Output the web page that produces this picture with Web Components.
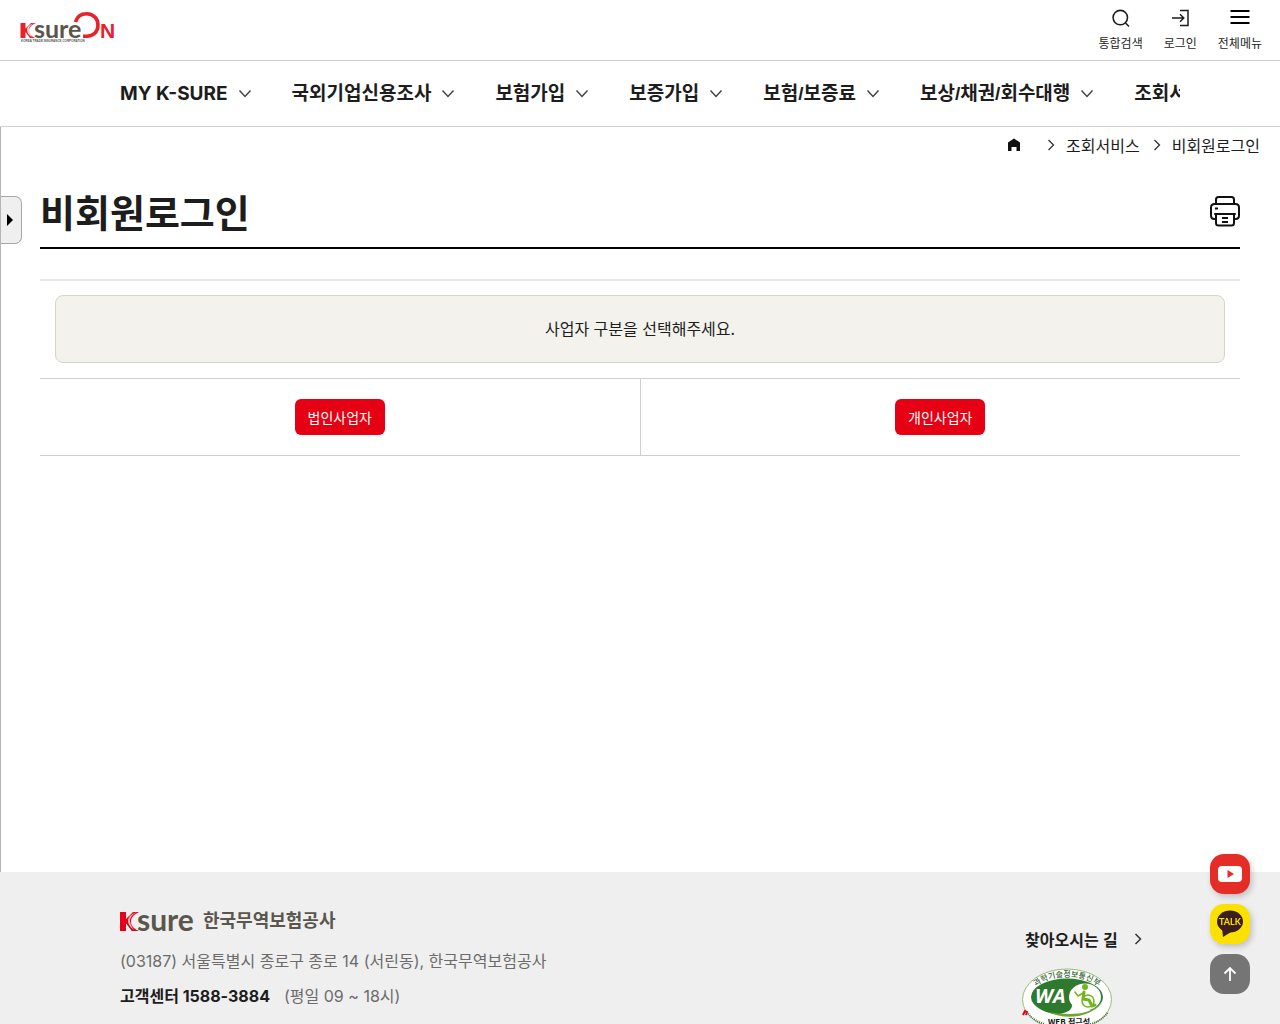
<!DOCTYPE html>
<html lang="ko">
<head>
<meta charset="utf-8">
<meta name="viewport" content="width=device-width, initial-scale=1">
<title>비회원로그인 | K-SURE 한국무역보험공사</title>
<style>
  html, body {
    margin: 0;
    height: 100%;
  }

  body {
    overflow: hidden;
    background: #fff;
    color: #1d1d1d;
    font: 16px/24px "Noto Sans CJK KR", "Liberation Sans", sans-serif;
  }
</style>
</head>
<body>
<ksure-app></ksure-app>

<script>
const define = (name, html) => {
  const template = document.createElement("template");
  template.innerHTML = html;

  customElements.define(name, class extends HTMLElement {
    constructor() {
      super();
      this.attachShadow({ mode: "open" }).appendChild(template.content.cloneNode(true));
    }
  });
};

// red K with a pale swoosh, then grey letters
define("ksure-mark", `
  <style>
    :host { display: block; }
    svg { display: block; }
    text { font: 700 30px Lato, "Liberation Sans", sans-serif; }
  </style>
  <svg width="76" height="24" viewBox="0 0 76 24" role="img" aria-label="K-SURE">
    <path d="M0 3h6v7l7-7h6c-6 3-8 6-8 10s3 7 8 9h-7l-6-8v8H0z" fill="#e60019"/>
    <path d="M8 13c1 4 5 8 11 9h-7l-6-8z" fill="#b5121f"/>
    <path d="M17 3c-6 2-9 5-9 9 0 3 2 6 6 9-3-4-4-7-4-9 0-4 3-7 7-9z" fill="#f4b9bb"/>
    <text x="17" y="22" fill="#5b564d">sure</text>
  </svg>
`);

define("tool-button", `
  <style>
    :host { display: block; }
    button {
      display: flex;
      flex-direction: column;
      align-items: center;
      gap: 6px;
      padding: 0;
      border: 0;
      background: none;
      color: #1d1d1d;
      font: 12px/18px "Noto Sans CJK KR", sans-serif;
      white-space: nowrap;
      cursor: pointer;
    }
  </style>
  <button type="button"><slot name="icon"></slot><slot></slot></button>
`);

define("top-bar", `
  <style>
    :host {
      display: flex;
      justify-content: space-between;
      box-sizing: border-box;
      height: 61px;
      padding: 8px 18px 0 20px;
      border-bottom: 1px solid #cdcdcd;
    }
    .logo { display: block; padding-top: 3px; }
    svg { display: block; }
    .tools { display: flex; gap: 21px; }
    .sure { font: 700 25px Lato, "Liberation Sans", sans-serif; }
    .on { font: 700 21px "Liberation Sans", sans-serif; }
    .caption { font: 700 3px "Liberation Sans", sans-serif; }
  </style>
  <a class="logo" href="#" aria-label="K-SURE ON">
    <svg width="96" height="34" viewBox="0 0 96 34">
      <path d="M.5 12h5v5.500L11 12h5c-5 2-7 5-7 8 0 3 2 5 6 7h-5l-4.500-6v6h-5z" fill="#e8212b"/>
      <path d="M14 12c-5 2-7 4-7 7s2 5 5 7c-2-3-3-5-3-7s1-5 5-7z" fill="#fbd5d6"/>
      <text class="sure" x="14" y="26.500" fill="#5b564d">sure</text>
      <path d="M55.500 11C57 5.500 61 2.800 66.500 2.800c7 0 11.500 5 11.500 11.200 0 7-5 11.200-11 11.200h-4" fill="none" stroke="#e8212b" stroke-width="3.600"/>
      <text class="on" x="80" y="26.500" fill="#e8212b">N</text>
      <text class="caption" x="1" y="31" fill="#5b564d">KOREA TRADE INSURANCE CORPORATION</text>
    </svg>
  </a>
  <div class="tools">
    <tool-button>
      <svg slot="icon" width="20" height="20" viewBox="0 0 20 20" fill="none" stroke="#1d1d1d" stroke-width="1.600"><circle cx="9.300" cy="9.600" r="7.200"/><path d="m14.500 15 3.500 3.500"/></svg>
      통합검색
    </tool-button>
    <tool-button>
      <svg slot="icon" width="20" height="20" viewBox="0 0 20 20" fill="none" stroke="#1d1d1d" stroke-width="1.500"><path d="M10 2.500h8v15h-8M2 10h12M10 6.200l3.800 3.800-3.800 3.800"/></svg>
      로그인
    </tool-button>
    <tool-button>
      <svg slot="icon" width="20" height="20" viewBox="0 0 20 20" stroke="#000" stroke-width="2"><path d="M.5 3h19M.5 9h19M.5 15h19"/></svg>
      전체메뉴
    </tool-button>
  </div>
`);

define("nav-item", `
  <style>
    :host { display: block; flex: none; }
    a {
      display: flex;
      align-items: center;
      gap: 10px;
      color: #1d1d1d;
      font: 700 19px/28px "Liberation Sans", "Noto Sans CJK KR", sans-serif;
      text-decoration: none;
      white-space: nowrap;
    }
    :host([latin]) a { font-family: Inter, sans-serif; }
  </style>
  <a href="#"><slot></slot>
    <svg width="14" height="10" viewBox="0 0 14 10" fill="none" stroke="#444" stroke-width="1.500" aria-hidden="true"><path d="m1.500 1.500 5.500 6 5.500-6"/></svg>
  </a>
`);

define("main-nav", `
  <style>
    :host { display: block; border-bottom: 1px solid #d2d2d2; padding: 0 100px; }
    nav {
      display: flex;
      align-items: center;
      gap: 40px;
      height: 65px;
      padding-left: 20px;
      overflow: hidden;
    }
  </style>
  <nav aria-label="주메뉴">
    <nav-item latin>MY K-SURE</nav-item>
    <nav-item>국외기업신용조사</nav-item>
    <nav-item>보험가입</nav-item>
    <nav-item>보증가입</nav-item>
    <nav-item>보험/보증료</nav-item>
    <nav-item>보상/채권/회수대행</nav-item>
    <nav-item>조회서비스</nav-item>
  </nav>
`);

define("bread-crumb", `
  <style>
    :host { display: block; padding: 6px 20px 0; }
    nav { display: flex; align-items: center; justify-content: flex-end; gap: 11px; }
    a { color: #1d1d1d; text-decoration: none; }
    svg { display: block; }
    .home { margin-right: 13px; }
    .arrow { margin-left: 2px; }
  </style>
  <nav aria-label="현재 위치">
    <a class="home" href="#" aria-label="홈"><svg width="14" height="16" viewBox="0 0 14 16"><path d="M7 1.500 13 5.500V14H9.500v-4h-5v4H1V5.500z" fill="#111"/></svg></a>
    <svg class="arrow" width="8" height="12" viewBox="0 0 8 12" fill="none" stroke="#333" stroke-width="1.300"><path d="m1.500 1 5 5-5 5"/></svg>
    <a href="#">조회서비스</a>
    <svg class="arrow" width="8" height="12" viewBox="0 0 8 12" fill="none" stroke="#333" stroke-width="1.300"><path d="m1.500 1 5 5-5 5"/></svg>
    <a href="#" aria-current="page">비회원로그인</a>
  </nav>
`);

define("page-heading", `
  <style>
    :host {
      display: flex;
      align-items: center;
      justify-content: space-between;
      padding: 26px 0 8px;
      border-bottom: 2px solid #000;
    }
    h1 { margin: 0; font-size: 38px; line-height: 56px; font-weight: 700; }
    button { padding: 0; border: 0; background: none; cursor: pointer; }
    svg { display: block; }
  </style>
  <h1><slot></slot></h1>
  <button type="button" aria-label="인쇄">
    <svg width="30" height="32" viewBox="0 0 30 32" fill="none" stroke="#111" stroke-width="2" stroke-linejoin="round" stroke-linecap="round">
      <path d="M6 9V4.500Q6 2 8.500 2h13Q24 2 24 4.500V9M6 24H4.500Q1 24 1 20.500v-8Q1 9 4.500 9h21Q29 9 29 12.500v8q0 3.500-3.500 3.500H24M5 19h20M6 19v9q0 2.500 2.500 2.500h13q2.500 0 2.500-2.500v-9"/>
      <path d="M5 13.500h3M12 23h6M12 27h6" stroke-linecap="butt"/>
    </svg>
  </button>
`);

define("business-select", `
  <style>
    :host { display: block; margin-top: 30px; border-top: 2px solid #e6e6e6; }
    .notice {
      margin: 14px 15px 15px;
      padding: 20px 21px 22px;
      border: 1px solid #d5d5c8;
      border-radius: 8px;
      background: #f3f2ed;
      text-align: center;
    }
    .choices { display: flex; border: solid #d0d0ca; border-width: 1px 0; }
    .choices div { flex: 1; padding: 20px 0; text-align: center; }
    .choices div + div { border-left: 1px solid #d0d0d0; }
    button {
      height: 36px;
      padding: 0 13px;
      border: 0;
      border-radius: 6px;
      background: #e60013;
      color: #fff;
      font: 14px/20px "Noto Sans CJK KR", sans-serif;
      vertical-align: top;
      cursor: pointer;
    }
  </style>
  <div class="notice">사업자 구분을 선택해주세요.</div>
  <div class="choices">
    <div><button type="button">법인사업자</button></div>
    <div><button type="button">개인사업자</button></div>
  </div>
`);

define("side-toggle", `
  <style>
    :host { position: absolute; top: 69px; left: 0; }
    button {
      display: flex;
      align-items: center;
      width: 21px;
      height: 48px;
      padding: 0 6px;
      border: 1px solid #a8a8a8;
      border-left: 0;
      border-radius: 0 7px 7px 0;
      background: #efefef;
      cursor: pointer;
    }
    svg { display: block; flex: none; }
  </style>
  <button type="button" aria-label="메뉴 열기">
    <svg width="6" height="12" viewBox="0 0 6 12"><path d="m0 0 6 6-6 6z"/></svg>
  </button>
`);

define("web-mark", `
  <style>
    :host { display: block; }
    svg { display: block; }
    text { font-family: "Noto Sans CJK KR", sans-serif; }
    .wa { font: italic 700 20px "Open Sans", sans-serif; }
  </style>
  <svg width="92" height="68" viewBox="0 0 92 68" role="img" aria-label="WEB 접근성">
    <defs>
      <path id="arc" d="M6 27C20 3 70 3 84 27"/>
    </defs>
    <ellipse cx="45" cy="31.500" rx="44.500" ry="30.500" fill="#fff" stroke="#9dbb74"/>
    <ellipse cx="45" cy="29" rx="36" ry="18.500" fill="#2d7a2e"/>
    <ellipse cx="63" cy="29" rx="16" ry="13.500" fill="#fff"/>
    <path d="M50 37c0 5-4 7-12 9 10 2 24 1 31-4z" fill="#fff"/>
    <path d="M26 44c18 9 43 5 54-9-8 8-20 11-33 11-8 0-15-1-21-2z" fill="#69a92b"/>
    <text class="wa" x="13" y="35" fill="#fff">WA</text>
    <g fill="none" stroke="#75b51c" stroke-linecap="round" stroke-linejoin="round">
      <circle cx="66" cy="33" r="6" stroke-width="1.500"/>
      <path d="m62 24-1 7 6 1 3 6 3-1" stroke-width="3"/>
      <path d="m61 25-5 3-3-4" stroke-width="1.500"/>
    </g>
    <circle cx="63" cy="19" r="3" fill="#75b51c"/>
    <text font-size="8" font-weight="500" fill="#315f35"><textPath href="#arc" startOffset="50%" text-anchor="middle">과학기술정보통신부</textPath></text>
    <text x="26" y="57" font-size="8" font-weight="700" fill="#111">WEB 접근성</text>
    <path d="m1 47 2-4 2 1-1 3" fill="none" stroke="#e60013" stroke-width="2"/>
    <path d="M5 44c4 6 10 10 18 12M68 56c8-2 14-6 18-12" fill="none" stroke="#55734a" stroke-width="2" stroke-dasharray="1 1"/>
  </svg>
`);

define("page-footer", `
  <style>
    :host {
      display: flex;
      justify-content: space-between;
      box-sizing: border-box;
      flex: none;
      height: 152px;
      padding: 36px 120px 0;
      overflow: hidden;
      background: #efefef;
      color: #6b6b6b;
      font-family: Inter, "Noto Sans CJK KR", sans-serif;
    }
    .brand { display: flex; align-items: center; gap: 7px; color: #5b564d; font-size: 18px; line-height: 26px; font-weight: 700; }
    p { margin: 0; }
    address { margin-top: 15px; font-style: normal; }
    .phone { display: flex; gap: 14px; margin-top: 11px; }
    .phone strong { color: #1d1d1d; }
    .more { margin-top: 12px; }
    .links { width: 138px; padding-top: 19px; }
    .way {
      display: flex;
      align-items: center;
      gap: 16px;
      margin-left: 3px;
      color: #1d1d1d;
      font-family: "Noto Sans CJK KR", sans-serif;
      font-weight: 700;
      text-decoration: none;
      white-space: nowrap;
    }
    web-mark { margin-top: 17px; }
  </style>
  <div>
    <div class="brand"><ksure-mark></ksure-mark><span>한국무역보험공사</span></div>
    <address>(03187) 서울특별시 종로구 종로 14 (서린동), 한국무역보험공사</address>
    <p class="phone"><strong>고객센터 1588-3884</strong><span>(평일 09 ~ 18시)</span></p>
    <p class="more">사업자등록번호</p>
  </div>
  <div class="links">
    <a class="way" href="#">찾아오시는 길
      <svg width="8" height="12" viewBox="0 0 8 12" fill="none" stroke="#333" stroke-width="1.500"><path d="m1.500 1 5 5-5 5"/></svg>
    </a>
    <web-mark></web-mark>
  </div>
`);

define("quick-links", `
  <style>
    :host {
      position: fixed;
      right: 30px;
      bottom: 30px;
      display: grid;
      gap: 10px;
    }
    a, button {
      display: grid;
      place-items: center;
      width: 40px;
      height: 40px;
      padding: 0;
      border: 0;
      border-radius: 14px;
      cursor: pointer;
    }
    a { box-shadow: 2px 3px 6px #0003; }
    .youtube { background: #e52d27; }
    .talk { background: #fae100; }
    button { background: #757575; }
    text { font: 700 9px Lato, "Liberation Sans", sans-serif; }
  </style>
  <a class="youtube" href="#" aria-label="유튜브">
    <svg width="24" height="18" viewBox="0 0 24 18"><rect width="24" height="16" y="1" rx="4" fill="#fff"/><path d="m9.500 5 6.500 4-6.500 4z" fill="#e52d27"/></svg>
  </a>
  <a class="talk" href="#">
    <svg width="28" height="28" viewBox="0 0 28 28"><ellipse cx="14" cy="11.500" rx="13" ry="11" fill="#3c1e1e"/><path d="m6 18 1 9 8-5z" fill="#3c1e1e"/><text x="14" y="15" text-anchor="middle" fill="#fae100">TALK</text></svg>
  </a>
  <button type="button" aria-label="맨 위로">
    <svg width="16" height="18" viewBox="0 0 16 18" fill="none" stroke="#fff" stroke-width="1.800"><path d="M8 16V3M2.500 8.500 8 3l5.500 5.500"/></svg>
  </button>
`);

define("ksure-app", `
  <style>
    :host { display: flex; flex-direction: column; min-height: 100%; }
    main { position: relative; flex: 1; border-left: 1px solid #b5b5b5; }
    .content { padding: 0 40px 0 39px; }
  </style>
  <top-bar></top-bar>
  <main-nav></main-nav>
  <main>
    <side-toggle></side-toggle>
    <bread-crumb></bread-crumb>
    <div class="content">
      <page-heading>비회원로그인</page-heading>
      <business-select></business-select>
    </div>
  </main>
  <page-footer></page-footer>
  <quick-links></quick-links>
`);
</script>
</body>
</html>
